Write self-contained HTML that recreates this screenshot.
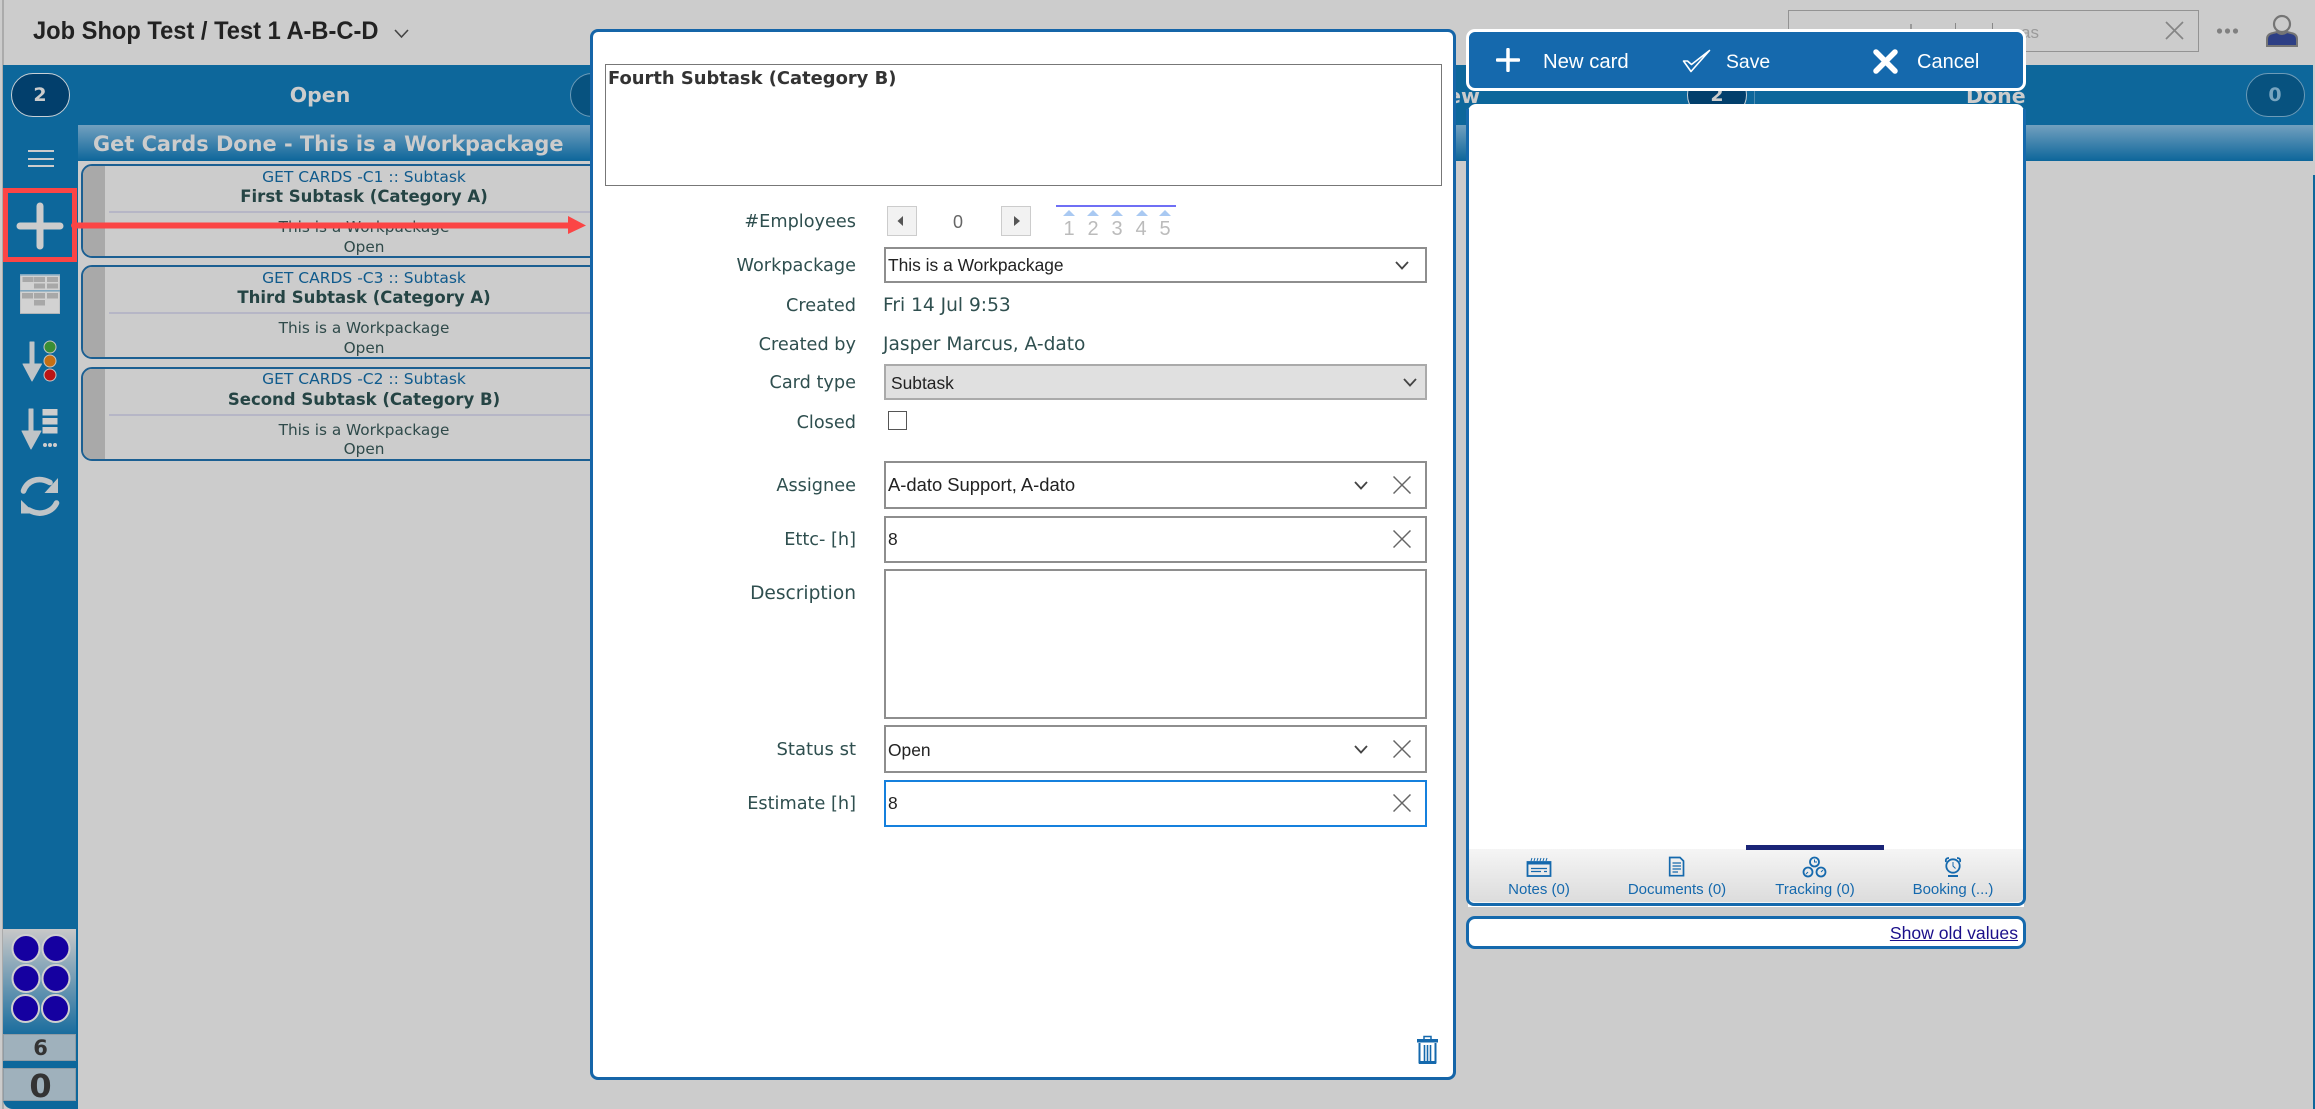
<!DOCTYPE html>
<html><head><meta charset="utf-8"><style>
html,body{margin:0;padding:0;background:#cccccc}
#p{position:relative;width:2315px;height:1109px;overflow:hidden;background:#cccccc;font-family:"DejaVu Sans","Liberation Sans",sans-serif}
#p div,#p span,#p a,#p svg{position:absolute;box-sizing:border-box}
.t{white-space:nowrap;line-height:24px;height:24px}
.c{transform:translateX(-50%)}
.b{font-weight:bold}
.card{left:81px;width:540px;border:2px solid #1b5f92;border-radius:11px;background:#cccccc;overflow:hidden;height:94px}
.strip{left:0;top:0;bottom:0;width:22px;background:#a9a9a9}
.cl{left:26px;right:-40px;height:2px;background:#b6b6c6}
.ct{font-size:15.5px;color:#0f5a8c}
.ctt{font-size:16.5px;font-weight:bold;color:#254444}
.cv{font-size:15.3px;color:#2f4a4a}
.lbl{right:1459px;font-size:17.7px;color:#2f4f4f}
.box{left:884px;width:543px;border:2px solid #8e8e8e;background:#fff}
.val{left:888px;font-family:"Liberation Sans",sans-serif;font-size:17.4px;color:#222}
.tab{font-family:"Liberation Sans",sans-serif;font-size:15px;color:#1569ad}
.w{font-family:"Liberation Sans",sans-serif;font-size:20px;color:#fff}
</style></head><body><div id="p">

<!-- left strip -->
<div style="left:2px;top:0;width:1.5px;height:1109px;background:#ababab"></div>

<!-- top bar -->
<span class="t" style="left:33px;top:16px;font-family:'Liberation Sans',sans-serif;font-weight:bold;font-size:25px;line-height:30px;height:30px;color:#222;transform:scaleX(.947);transform-origin:0 50%">Job Shop Test / Test 1 A-B-C-D</span>
<svg style="left:394px;top:28px" width="15" height="11" viewBox="0 0 15 11"><path d="M1 2 L7.5 9 L14 2" fill="none" stroke="#444" stroke-width="1.6"/></svg>

<div style="left:1788px;top:10px;width:411px;height:42px;border:1.5px solid #939393"></div>
<span class="t" style="left:2021px;top:21px;font-family:'Liberation Sans',sans-serif;font-size:17px;color:#9a9a9a">as</span>
<div style="left:1910px;top:24px;width:2px;height:5px;background:#999"></div>
<div style="left:1955px;top:23px;width:1px;height:6px;background:#888"></div>
<div style="left:1992px;top:23px;width:1px;height:6px;background:#888"></div>
<svg style="left:2165px;top:21px" width="19" height="19" viewBox="0 0 19 19"><path d="M1 1 L18 18 M18 1 L1 18" stroke="#858585" stroke-width="1.7"/></svg>
<svg style="left:2215px;top:26px" width="26" height="10" viewBox="0 0 26 10"><circle cx="4.5" cy="5" r="2.6" fill="#808080"/><circle cx="12.5" cy="5" r="2.6" fill="#808080"/><circle cx="20.5" cy="5" r="2.6" fill="#808080"/></svg>
<svg style="left:2265px;top:13px" width="34" height="35" viewBox="0 0 34 35"><circle cx="17" cy="11" r="8" fill="#ccc" stroke="#757575" stroke-width="2.2"/><path d="M2 33 L2 26 Q2 21 8 20 L12 19 Q17 23 22 19 L26 20 Q32 21 32 26 L32 33 Z" fill="#2d3f85" stroke="#757575" stroke-width="2"/></svg>

<!-- header band -->
<div style="left:3px;top:65px;width:2310px;height:60px;background:#0d679b"></div>
<div style="left:11px;top:73px;width:59px;height:44px;border-radius:22px;background:#023f6c;border:1.5px solid #c8d0d6"></div>
<span class="t c b" style="left:40px;top:83px;font-size:19px;color:#ccc">2</span>
<span class="t c b" style="left:320px;top:83px;font-size:20.5px;color:#ccc">Open</span>
<div style="left:570px;top:73px;width:59px;height:44px;border-radius:22px;background:#07527f;border:1.5px solid #6c9bb8"></div>
<span class="t b" style="right:835px;top:84px;font-size:20.5px;color:#ccc">New</span>
<div style="left:1687px;top:73px;width:60px;height:44px;border-radius:22px;background:#023f6c;border:1.5px solid #c8d0d6"></div>
<span class="t c b" style="left:1717px;top:83px;font-size:19px;color:#ccc">2</span>
<div style="left:1754px;top:65px;width:1px;height:60px;background:#4f8db2"></div>
<span class="t b" style="left:1966px;top:84px;font-size:20.5px;color:#ccc">Done</span>
<div style="left:2246px;top:73px;width:59px;height:44px;border-radius:22px;background:#07527f;border:1.5px solid #6c9bb8"></div>
<span class="t c b" style="left:2275px;top:83px;font-size:19px;color:#78a5c0">0</span>

<!-- group band -->
<div style="left:78px;top:125px;width:2235px;height:36px;background:linear-gradient(#72a0bf,#0d669b)"></div>
<span class="t b" style="left:93px;top:132px;font-size:20.9px;color:#ccc">Get Cards Done - This is a Workpackage</span>
<div style="left:2313px;top:175px;width:2px;height:934px;background:#0d679b"></div>

<!-- sidebar -->
<div style="left:3px;top:125px;width:75px;height:984px;background:#0d679b;border-bottom-left-radius:10px"></div>
<div style="left:28px;top:150px;width:26px;height:2.4px;background:#ccc"></div>
<div style="left:28px;top:157.5px;width:26px;height:2.4px;background:#ccc"></div>
<div style="left:28px;top:165px;width:26px;height:2.4px;background:#ccc"></div>
<svg style="left:16px;top:202px" width="48" height="48" viewBox="0 0 48 48"><path d="M4 24 H44 M24 4 V44" stroke="#ccc" stroke-width="7" stroke-linecap="round"/></svg>

<!-- board icon -->
<svg style="left:20px;top:274px" width="40" height="40" viewBox="20 274 40 40"><rect x="20" y="274" width="40" height="39.5" fill="#d2d2d2" stroke="#aeb4b8" stroke-width="1"/><rect x="20" y="274" width="40" height="1.6" fill="#7fa6bf"/><rect x="20" y="290" width="40" height="1.6" fill="#7fa6bf"/>
<g fill="#a8a8a8"><rect x="22.5" y="277" width="11" height="5"/><rect x="34" y="277" width="11" height="5"/><rect x="47" y="277" width="11" height="5"/><rect x="34" y="283.5" width="11" height="5"/><rect x="47" y="283.5" width="11" height="5"/><rect x="22" y="293" width="11" height="5.5"/><rect x="34" y="293" width="11" height="5.5"/><rect x="47" y="293" width="11" height="5.5"/><rect x="34" y="300" width="11" height="5.5"/></g></svg>

<!-- sort traffic -->
<svg style="left:18px;top:338px" width="46" height="46" viewBox="18 338 46 46"><path d="M30 342 h4 V364 h7.5 L32 381 L23 364 H30 Z" fill="#bfc4c7" stroke="#bfc4c7" stroke-linejoin="round"/>
<circle cx="50" cy="347" r="6" fill="#3a8e36" stroke="#c5c5c5" stroke-width="1"/><circle cx="50" cy="361" r="6" fill="#c46f14" stroke="#c5c5c5" stroke-width="1"/><circle cx="50" cy="375" r="6" fill="#bb1516" stroke="#c5c5c5" stroke-width="1"/></svg>

<!-- sort list -->
<svg style="left:18px;top:405px" width="46" height="48" viewBox="18 405 46 48"><path d="M29 409 h4 V431 h8 L31 449 L22 431 H29 Z" fill="#bfc4c7" stroke="#bfc4c7" stroke-linejoin="round"/>
<rect x="42.5" y="409" width="15" height="6.5" fill="#cdcdcd"/><rect x="42.5" y="418" width="15" height="6.5" fill="#cdcdcd"/><rect x="42.5" y="427" width="15" height="6.5" fill="#cdcdcd"/>
<circle cx="45" cy="445" r="2" fill="#cdcdcd"/><circle cx="50" cy="445" r="2" fill="#cdcdcd"/><circle cx="55" cy="445" r="2" fill="#cdcdcd"/></svg>

<!-- refresh -->
<svg style="left:18px;top:472px" width="44" height="48" viewBox="18 472 44 48"><path d="M23.5 491 C27 481 38 476 50 482.5" fill="none" stroke="#bfc4c7" stroke-width="5.6" stroke-linecap="round"/><path d="M58 478 V493 H44.5 Z" fill="#bfc4c7"/>
<path d="M56.5 503 C53 511 41 517 29 510" fill="none" stroke="#bfc4c7" stroke-width="5.6" stroke-linecap="round"/><path d="M21 500 V513.5 H35 Z" fill="#bfc4c7"/></svg>

<!-- bottom sidebar -->
<div style="left:3px;top:929px;width:73px;height:105px;background:linear-gradient(#c8c8c8,#1a6d9e)"></div>
<svg style="left:3px;top:929px" width="73" height="105" viewBox="3 929 73 105"><g fill="#1500a0" stroke="#cfcfcf" stroke-width="2"><circle cx="26" cy="948.5" r="13.5"/><circle cx="56" cy="948.5" r="13.5"/><circle cx="26" cy="978.5" r="13.5"/><circle cx="56" cy="978.5" r="13.5"/><circle cx="25.5" cy="1008.5" r="13.5"/><circle cx="55.5" cy="1008.5" r="13.5"/></g></svg>
<div style="left:3px;top:1034px;width:73px;height:27px;background:#9fb1bc;border:1.5px solid #8f9ca5"></div>
<span class="t c b" style="left:40.5px;top:1036px;font-size:21px;color:#333">6</span>
<div style="left:3px;top:1068px;width:73px;height:33px;background:#9fb1bc;border:1.5px solid #8f9ca5"></div>
<span class="t c b" style="left:40.5px;top:1074px;font-size:32px;color:#333">0</span>

<!-- cards -->
<div class="card" style="top:164px"><div class="strip"></div><div class="cl" style="top:45px"></div></div>
<span class="t c ct" style="left:364px;top:165px">GET CARDS -C1 :: Subtask</span>
<span class="t c ctt" style="left:364px;top:185px">First Subtask (Category A)</span>
<span class="t c cv" style="left:364px;top:215px">This is a Workpackage</span>
<span class="t c cv" style="left:364px;top:235px">Open</span>

<div class="card" style="top:265px"><div class="strip"></div><div class="cl" style="top:45px"></div></div>
<span class="t c ct" style="left:364px;top:265.500px">GET CARDS -C3 :: Subtask</span>
<span class="t c ctt" style="left:364px;top:286px">Third Subtask (Category A)</span>
<span class="t c cv" style="left:364px;top:315.500px">This is a Workpackage</span>
<span class="t c cv" style="left:364px;top:335.500px">Open</span>

<div class="card" style="top:367px"><div class="strip"></div><div class="cl" style="top:45px"></div></div>
<span class="t c ct" style="left:364px;top:367px">GET CARDS -C2 :: Subtask</span>
<span class="t c ctt" style="left:364px;top:388px">Second Subtask (Category B)</span>
<span class="t c cv" style="left:364px;top:418px">This is a Workpackage</span>
<span class="t c cv" style="left:364px;top:437px">Open</span>

<!-- red highlight -->
<div style="left:3px;top:188px;width:74px;height:74px;border:5px solid #fb4545"></div>
<svg style="left:70px;top:214px" width="520" height="24" viewBox="70 214 520 24"><path d="M74 225.500 H570" stroke="#fb4545" stroke-width="6" stroke-linecap="round"/><path d="M568 216 L586 225.500 L568 234 Z" fill="#fb4545"/></svg>

<!-- modal -->
<div style="left:590px;top:29px;width:866px;height:1051px;background:#fff;border:3px solid #1565a8;border-radius:8px"></div>
<div style="left:605px;top:64px;width:837px;height:122px;border:1.5px solid #777"></div>
<span class="t b" style="left:608px;top:67px;font-size:17.9px;color:#333">Fourth Subtask (Category B)</span>

<span class="t lbl" style="top:210px">#Employees</span>
<div style="left:887px;top:206px;width:30px;height:30px;background:#f2f2f2;border:1.5px solid #ccc"></div>
<svg style="left:896px;top:215px" width="10" height="12"><path d="M7 1 V11 L1.500 6 Z" fill="#555"/></svg>
<span class="t c" style="left:958px;top:210px;font-family:'Liberation Sans',sans-serif;font-size:18px;color:#666">0</span>
<div style="left:1001px;top:206px;width:30px;height:30px;background:#f2f2f2;border:1.5px solid #ccc"></div>
<svg style="left:1012px;top:215px" width="10" height="12"><path d="M2 1 V11 L8 6 Z" fill="#555"/></svg>
<div style="left:1056px;top:205px;width:120px;height:2px;background:#6f6ff5"></div>
<svg style="left:1056px;top:209px" width="120" height="8" viewBox="1056 209 120 8"><g fill="#a9c9f2"><path d="M1063 216 L1069 210 L1075 216Z"/><path d="M1087 216 L1093 210 L1099 216Z"/><path d="M1111 216 L1117 210 L1123 216Z"/><path d="M1136 216 L1142 210 L1148 216Z"/><path d="M1159 216 L1165 210 L1171 216Z"/></g></svg>
<span class="t c" style="left:1069px;top:217px;font-family:'Liberation Sans',sans-serif;font-size:20px;color:#bbb">1</span>
<span class="t c" style="left:1093px;top:217px;font-family:'Liberation Sans',sans-serif;font-size:20px;color:#bbb">2</span>
<span class="t c" style="left:1117px;top:217px;font-family:'Liberation Sans',sans-serif;font-size:20px;color:#bbb">3</span>
<span class="t c" style="left:1141px;top:217px;font-family:'Liberation Sans',sans-serif;font-size:20px;color:#bbb">4</span>
<span class="t c" style="left:1165px;top:217px;font-family:'Liberation Sans',sans-serif;font-size:20px;color:#bbb">5</span>

<span class="t lbl" style="top:254px">Workpackage</span>
<div class="box" style="top:247px;height:36px"></div>
<span class="t val" style="top:253px">This is a Workpackage</span>
<svg style="left:1395px;top:261px" width="14" height="9"><path d="M1 1 L7 7.500 L13 1" fill="none" stroke="#444" stroke-width="1.8"/></svg>

<span class="t lbl" style="top:293.500px">Created</span>
<span class="t" style="left:883px;top:293.500px;font-size:18.6px;color:#2f4f4f">Fri 14 Jul 9:53</span>
<span class="t lbl" style="top:332.500px">Created by</span>
<span class="t" style="left:883px;top:332.500px;font-size:18.6px;color:#2f4f4f">Jasper Marcus, A-dato</span>

<span class="t lbl" style="top:371px">Card type</span>
<div class="box" style="top:364px;height:36px;background:#e0e0e0;border-color:#aaa"></div>
<span class="t val" style="top:370.500px;left:891px">Subtask</span>
<svg style="left:1403px;top:378px" width="14" height="9"><path d="M1 1 L7 7.500 L13 1" fill="none" stroke="#444" stroke-width="1.8"/></svg>

<span class="t lbl" style="top:410.500px">Closed</span>
<div style="left:888px;top:411px;width:19px;height:19px;border:1.5px solid #555;background:#fff"></div>

<span class="t lbl" style="top:474px">Assignee</span>
<div class="box" style="top:461px;height:48px"></div>
<span class="t val" style="top:473px;font-size:18.4px">A-dato Support, A-dato</span>
<svg style="left:1354px;top:481px" width="14" height="9"><path d="M1 1 L7 7.500 L13 1" fill="none" stroke="#444" stroke-width="1.8"/></svg>
<svg style="left:1393px;top:476px" width="18" height="18"><path d="M0.500 0.500 L17.500 17.500 M17.500 0.500 L0.500 17.500" stroke="#666" stroke-width="1.5"/></svg>

<span class="t lbl" style="top:527.500px">Ettc- [h]</span>
<div class="box" style="top:515.500px;height:47.500px"></div>
<span class="t val" style="top:527px">8</span>
<svg style="left:1393px;top:530px" width="18" height="18"><path d="M0.500 0.500 L17.500 17.500 M17.500 0.500 L0.500 17.500" stroke="#666" stroke-width="1.5"/></svg>

<span class="t lbl" style="top:581.500px;font-size:18.6px">Description</span>
<div class="box" style="top:569px;height:150px"></div>

<span class="t lbl" style="top:738px;font-size:18px">Status st</span>
<div class="box" style="top:725px;height:47.500px"></div>
<span class="t val" style="top:737.500px">Open</span>
<svg style="left:1354px;top:745px" width="14" height="9"><path d="M1 1 L7 7.500 L13 1" fill="none" stroke="#444" stroke-width="1.8"/></svg>
<svg style="left:1393px;top:740px" width="18" height="18"><path d="M0.500 0.500 L17.500 17.500 M17.500 0.500 L0.500 17.500" stroke="#666" stroke-width="1.5"/></svg>

<span class="t lbl" style="top:792px">Estimate [h]</span>
<div class="box" style="top:779.500px;height:47.500px;border-color:#1580dd"></div>
<span class="t val" style="top:791px">8</span>
<svg style="left:1393px;top:794px" width="18" height="18"><path d="M0.500 0.500 L17.500 17.500 M17.500 0.500 L0.500 17.500" stroke="#666" stroke-width="1.5"/></svg>

<svg style="left:1416px;top:1035px" width="23" height="30" viewBox="0 0 23 30"><path d="M8 4 V1.500 H15 V4" fill="none" stroke="#1569ad" stroke-width="1.500"/><rect x="1" y="4" width="21" height="3.500" fill="#1569ad"/><path d="M3.500 8 V27.500 H19.500 V8" fill="none" stroke="#1569ad" stroke-width="2"/><path d="M8.500 10 V26 M11.500 10 V26 M14.500 10 V26" stroke="#1569ad" stroke-width="1.600"/><rect x="3" y="26" width="17" height="3" fill="#1569ad"/></svg>

<!-- toolbar -->
<div style="left:1466px;top:29px;width:560px;height:62px;background:#1569ad;border:3px solid #fff;border-radius:9px"></div>
<svg style="left:1496px;top:48px" width="24" height="24"><path d="M1.500 12 H22.500 M12 1.500 V22.500" stroke="#fff" stroke-width="3.500" stroke-linecap="round"/></svg>
<span class="t w" style="left:1543px;top:50px;font-size:20.3px">New card</span>
<svg style="left:1682px;top:49px" width="29" height="24" viewBox="0 0 29 24"><path d="M1.500 12 L9 22.500 L27.500 1.500 L9.500 15.500 L5.500 12 Z" fill="none" stroke="#fff" stroke-width="1.600" stroke-linejoin="round"/></svg>
<span class="t w" style="left:1726px;top:50px;font-size:19.4px">Save</span>
<svg style="left:1873px;top:49px" width="25" height="25"><path d="M3 3 L22 22 M22 3 L3 22" stroke="#fff" stroke-width="5.500" stroke-linecap="round"/></svg>
<span class="t w" style="left:1917px;top:50px">Cancel</span>

<!-- right panel -->
<div style="left:1468px;top:104px;width:556px;height:803px;background:#fff;border-radius:8px 8px 0 0"></div>
<div style="left:1466px;top:109px;width:560px;height:797px;border:3px solid #1569ad;border-top:0;border-radius:0 0 8px 8px"></div>
<div style="left:1469px;top:849px;width:554px;height:54px;background:linear-gradient(#f5f5f5,#dcdcdc);border-radius:0 0 6px 6px;border-bottom:1.500px solid #f4f4f4"></div>
<div style="left:1746px;top:845px;width:138px;height:4.500px;background:#1a2477"></div>

<svg style="left:1525px;top:855px" width="28" height="23" viewBox="1525 855 28 23"><path d="M1531 861 L1532 858 M1534 861 L1535 858 M1537 861 L1538 858 M1540 861 L1541 858 M1543 861 L1544 858 M1546 861 L1547 858" stroke="#1569ad" stroke-width="1"/><rect x="1527.500" y="862" width="23" height="14" fill="none" stroke="#1569ad" stroke-width="1.800"/><rect x="1527" y="862" width="24" height="2.500" fill="#1569ad"/><path d="M1531 868.500 H1547 M1531 871.500 H1541 M1544 871.500 H1547" stroke="#1569ad" stroke-width="1.300"/></svg>
<svg style="left:1667px;top:855px" width="19" height="23" viewBox="1667 855 19 23"><path d="M1669.700 857.500 H1680 L1683.500 861 V875.700 H1669.700 Z" fill="none" stroke="#1569ad" stroke-width="1.700"/><path d="M1672.500 863 H1681 M1672.500 866 H1681 M1672.500 869 H1681 M1672.500 872 H1678" stroke="#1569ad" stroke-width="1.200"/></svg>
<svg style="left:1802px;top:855px" width="26" height="23" viewBox="1802 855 26 23"><g fill="none" stroke="#1569ad" stroke-width="1.800"><circle cx="1814.500" cy="862" r="4.500"/><circle cx="1808" cy="872" r="4.500"/><circle cx="1821" cy="872" r="4.500"/></g><path d="M1814.500 859.500 V862 H1817 M1806 874 L1808 872 M1821 872 L1823 870" fill="none" stroke="#1569ad" stroke-width="1"/></svg>
<svg style="left:1943px;top:855px" width="21" height="23" viewBox="1943 855 21 23"><circle cx="1953" cy="866" r="6.700" fill="none" stroke="#1569ad" stroke-width="1.800"/><path d="M1946 862 Q1945 858 1949 858 M1960 862 Q1961 858 1957 858" fill="none" stroke="#1569ad" stroke-width="1.800"/><path d="M1953 862 V866 L1955.500 868.500" fill="none" stroke="#1569ad" stroke-width="1"/><path d="M1948 876 H1958" stroke="#1569ad" stroke-width="2"/></svg>

<span class="t c tab" style="left:1539px;top:877.500px">Notes (0)</span>
<span class="t c tab" style="left:1677px;top:877.500px">Documents (0)</span>
<span class="t c tab" style="left:1815px;top:877.500px">Tracking (0)</span>
<span class="t c tab" style="left:1953px;top:877.500px">Booking (...)</span>

<!-- show old values -->
<div style="left:1466px;top:916px;width:560px;height:33px;background:#fff;border:3px solid #1569ad;border-radius:9px"></div>
<a class="t" style="right:297px;top:921px;font-family:'Liberation Sans',sans-serif;font-size:17.6px;color:#1a0f8a;text-decoration:underline">Show old values</a>

</div></body></html>
